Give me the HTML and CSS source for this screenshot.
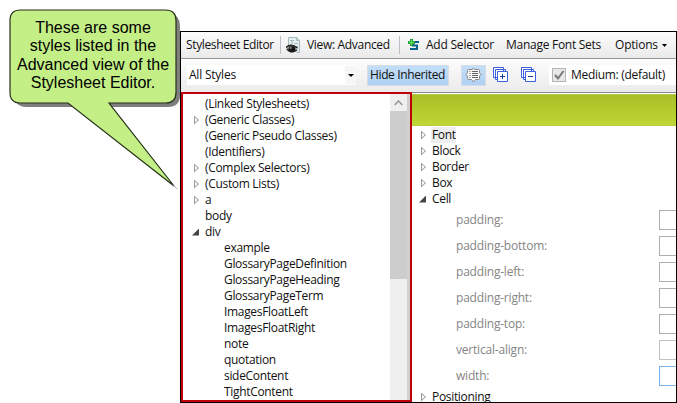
FILE: index.html
```html
<!DOCTYPE html>
<html lang="en">
<head>
<meta charset="utf-8">
<title>Stylesheet Editor</title>
<link rel="stylesheet" href="styles.css">
</head>
<body>
<div class="window">
  <div class="bar bar-top">
    <span class="t-title">Stylesheet Editor</span>
    <i class="sep"></i>
    <svg class="ico-view" width="15" height="17" viewBox="0 0 15 17">
      <path d="M2.500 10V.5h8l3 3v12h-3" fill="#e4efef" stroke="#a5b8bb"/>
      <path d="M10.500.5v3h3M4 3.500h4M6 3.500v4M8 6.500h4M10 9.500h2" fill="none" stroke="#a5b8bb"/>
      <path d="M0 11Q3 6.500 6 8 10 8 12 12 9 16 5 16 1 15 0 11Z" fill="#999" opacity=".5"/>
      <path d="M0 10.500Q5 6 11.500 11M1 12Q5 17 11 13" fill="none" stroke="#222" stroke-width="1.500"/>
      <ellipse cx="6" cy="12" rx="3.500" ry="2.700" fill="#151515"/><rect x="4" y="10.500" width="1.500" height="1" fill="#fff"/>
    </svg>
    <span class="t-view">View: Advanced</span>
    <i class="sep"></i>
    <svg class="ico-add" width="12" height="12" viewBox="0 0 12 12">
      <path d="M11 3H5v3.500h4V10H2" fill="none" stroke="#075f91" stroke-width="2"/>
      <path d="M3.500 0v7M0 3.500h7" stroke="#249a3b" stroke-width="3"/><path d="M3.500 1v5M1 3.500h5" stroke="#52d95a" stroke-width="1.300"/>
    </svg>
    <span class="t-add">Add Selector</span>
    <span class="t-fonts">Manage Font Sets</span>
    <span class="t-options">Options</span>
    <svg class="caret" width="5" height="3"><path d="M0 0h5L2.500 3Z"/></svg>
  </div>
  <div class="bar bar-second">
    <div class="combo"><span>All Styles</span><div class="combo-btn"><svg width="6" height="3"><path d="M0 0h6L3 3Z"/></svg></div></div>
    <div class="toggle hide"><span>Hide Inherited</span></div>
    <div class="toggle group"><svg width="17" height="15" viewBox="0 0 17 15">
      <path d="M3.500 1.500H7l1.500-1 1.500 1h3.500q1 0 1 1v2.300l1.500 1.700-1.500 1.700v2.300q0 1-1 1H10.500l-2 2.500-2-2.500h-3q-1 0-1-1V8.200L1 6.500l1.500-1.700V2.500q0-1 1-1Z" fill="#f7f7f7" stroke="#858585"/>
      <path d="M7 3.500h6M7 5.500h6M7 7.500h6M7 9.500h6M4.500 3.500h1M4.500 5.500h1M4.500 7.500h1M4.500 9.500h1" stroke="#666"/>
    </svg></div>
    <svg class="stack" width="16" height="16" viewBox="0 0 16 16"><g fill="#fff" stroke="#3a5fe0"><path d="M.5.5h10v10H.5ZM2.500 2.500h10v10h-10Z"/><path d="M4.500 4.500h10v10h-10Z"/></g><path d="M7 9.500h5M9.500 7v5" stroke="#123a99"/></svg>
    <svg class="stack stack-minus" width="16" height="16" viewBox="0 0 16 16"><g fill="#fff" stroke="#3a5fe0"><path d="M.5.5h10v10H.5ZM2.500 2.500h10v10h-10Z"/><path d="M4.500 4.500h10v10h-10Z"/></g><path d="M7 9.500h5" stroke="#123a99"/></svg>
    <div class="medium"><svg width="14" height="14"><rect x=".5" y=".5" width="13" height="13" fill="#e8e8e8" stroke="#b4b4b4"/><path d="M3 7l3 3.500 5.500-7.500" fill="none" stroke="#777" stroke-width="2"/></svg><span>Medium: (default)</span></div>
  </div>
  <div class="content">
    <div class="styles-pane">
      <ul class="tree">
        <li><i></i><span>(Linked Stylesheets)</span></li>
        <li><i class="closed"></i><span>(Generic Classes)</span></li>
        <li><i></i><span>(Generic Pseudo Classes)</span></li>
        <li><i></i><span>(Identifiers)</span></li>
        <li><i class="closed"></i><span>(Complex Selectors)</span></li>
        <li><i class="closed"></i><span>(Custom Lists)</span></li>
        <li><i class="closed"></i><span>a</span></li>
        <li><i></i><span>body</span></li>
        <li><i class="open"></i><span>div</span></li>
        <li class="child">example</li>
        <li class="child">GlossaryPageDefinition</li>
        <li class="child">GlossaryPageHeading</li>
        <li class="child">GlossaryPageTerm</li>
        <li class="child">ImagesFloatLeft</li>
        <li class="child">ImagesFloatRight</li>
        <li class="child">note</li>
        <li class="child">quotation</li>
        <li class="child">sideContent</li>
        <li class="child">TightContent</li>
      </ul>
      <div class="scroll"><div class="up"><svg width="9" height="6"><path d="M.7 5 4.500 1l3.800 4" fill="none" stroke="#909090" stroke-width="1.300"/></svg></div><div class="thumb"></div></div>
    </div>
    <div class="props-pane">
      <div class="banner"></div>
      <ul class="tree props">
        <li><i class="closed"></i><span class="focus">Font</span></li>
        <li><i class="closed"></i><span>Block</span></li>
        <li><i class="closed"></i><span>Border</span></li>
        <li><i class="closed"></i><span>Box</span></li>
        <li><i class="open"></i><span>Cell</span></li>
        <li class="prop"><span>padding:</span><b></b></li>
        <li class="prop"><span>padding-bottom:</span><b></b></li>
        <li class="prop"><span>padding-left:</span><b></b></li>
        <li class="prop"><span>padding-right:</span><b></b></li>
        <li class="prop"><span>padding-top:</span><b></b></li>
        <li class="prop"><span>vertical-align:</span><b class="select"></b></li>
        <li class="prop"><span>width:</span><b class="active"></b></li>
        <li class="last"><i class="closed"></i><span>Positioning</span></li>
      </ul>
    </div>
  </div>
</div>
<div class="callout">
  <svg width="190" height="200">
    <path d="M24 13H170Q180 15 180 26V95Q180 107 168 107H26Q17 107 14 98V24Z" fill="#7f7f7f"/>
    <path d="M20.500 10H165.500Q176 10 176 20.500V92.500Q176 103 165.500 103H109L174 186 68 103H20.500Q10 103 10 92.500V20.500Q10 10 20.500 10Z" fill="#c3ef86" stroke="#253018" stroke-width="1.200"/>
    <path d="M172 184l5 5" stroke="#777" stroke-width=".6"/>
  </svg>
  <p>These are some<br>styles listed in the<br>Advanced view of the<br>Stylesheet Editor.</p>
</div>
</body>
</html>
```

FILE: styles.css
```css
* { box-sizing: border-box; }
body { margin: 0; width: 677px; height: 403px; overflow: hidden; background: #fff; color: #111; font: 12px/16px "Open Sans", sans-serif; }
.window { margin: 31px 0 0 180px; width: 497px; height: 372px; border: 1px solid #000; display: flex; flex-direction: column; }
svg { display: block; flex: none; }
.bar { display: flex; align-items: center; flex: none; white-space: nowrap; }
.bar span { flex: none; }
.bar-top { height: 27px; padding-left: 5px; background: linear-gradient(#fcfcfc, #eaeaea); border-bottom: 1px solid #969696; }
.bar-second { height: 34px; background: linear-gradient(#fcfcfc, #ebebeb); border-bottom: 1px solid #898989; padding: 0 0 1px 6px; }
.bar-top .t-title { width: 94px; letter-spacing: -.36px; }
.sep { width: 1px; height: 18px; background: #b9bfc8; flex: none; }
.ico-view { margin-left: 5px; }
.t-view { margin-left: 6px; width: 92px; letter-spacing: -.32px; }
.ico-add { margin-left: 8px; }
.t-add { margin-left: 6px; width: 80px; letter-spacing: -.22px; }
.t-fonts { width: 109px; letter-spacing: -.27px; }
.t-options { width: 47px; letter-spacing: -.2px; }
.combo { width: 169px; height: 20px; background: #fff; display: flex; align-items: center; justify-content: space-between; padding-left: 2px; letter-spacing: -.22px; }
.combo-btn { width: 11px; height: 18px; background: #f6f6f6; display: flex; align-items: center; justify-content: center; }
.toggle { background: linear-gradient(#c3def8, #afd1f3); border: 1px solid #d7dde4; display: flex; align-items: center; height: 21px; flex: none; }
.hide { margin-left: 11px; width: 82px; padding-left: 2px; letter-spacing: -.37px; }
.group { margin-left: 12px; width: 25px; justify-content: center; }
.stack { margin-left: 7px; }
.stack-minus { margin-left: 12px; }
.medium { flex: 1; margin-left: 12px; padding-left: 3px; height: 20px; background: #fff; display: flex; align-items: center; gap: 5px; letter-spacing: -.3px; }
.content { flex: 1; min-height: 0; display: flex; }
.styles-pane { width: 231px; height: 310px; margin-top: -1px; border: 2px solid #c00008; background: #fff; display: flex; justify-content: space-between; overflow: hidden; }
.tree { list-style: none; margin: 0; padding: 2px 0 0 10px; white-space: nowrap; }
.tree li { height: 16px; display: flex; align-items: center; letter-spacing: -.32px; }
.tree i { width: 12px; height: 9px; flex: none; }
.tree .closed { background: #999; width: 6px; clip-path: polygon(evenodd, 0 0, 5px 4.5px, 0 9px, 0 0, 1px 2px, 1px 7px, 3.7px 4.5px, 1px 2px); margin: 0 5px 0 1px; }
.tree .open { height: 7px; width: 7px; background: #444; clip-path: polygon(100% 0, 100% 100%, 0 100%); margin: 0 6px 0 -1px; }
.tree .child { padding-left: 31px; }
.scroll { width: 20px; background: #efefef; border-right: 3px solid #d2cfcd; }
.up { height: 17px; display: flex; align-items: center; justify-content: center; }
.thumb { height: 168px; background: #cdcdcd; }
.props-pane { flex: 1; min-width: 0; overflow: hidden; background: #fff; }
.banner { height: 32px; margin-top: 1px; background: linear-gradient(#a9bf28, #bed733); border: solid #b8cc46; border-width: 1px 0; }
.props { padding: 1px 0 0 8px; }
.props .focus { background: #eee; margin-left: -1px; padding: 0 0 0 1px; }
.tree .prop { height: 26px; padding-left: 36px; color: #858585; justify-content: space-between; letter-spacing: -.2px; }
.prop b { width: 17px; height: 20px; flex: none; border: 1px solid #abadb3; border-right: 0; }
.prop .select { border-color: #c1c1c1; }
.prop .active { border-color: #7eb4ea; }
.callout { position: absolute; left: 0; top: 0; width: 190px; height: 200px; }
.callout p { position: absolute; left: 10px; top: 19px; width: 166px; margin: 0; text-align: center; color: #000; font: 16px/18.3px "Liberation Sans", sans-serif; white-space: nowrap; }
```
